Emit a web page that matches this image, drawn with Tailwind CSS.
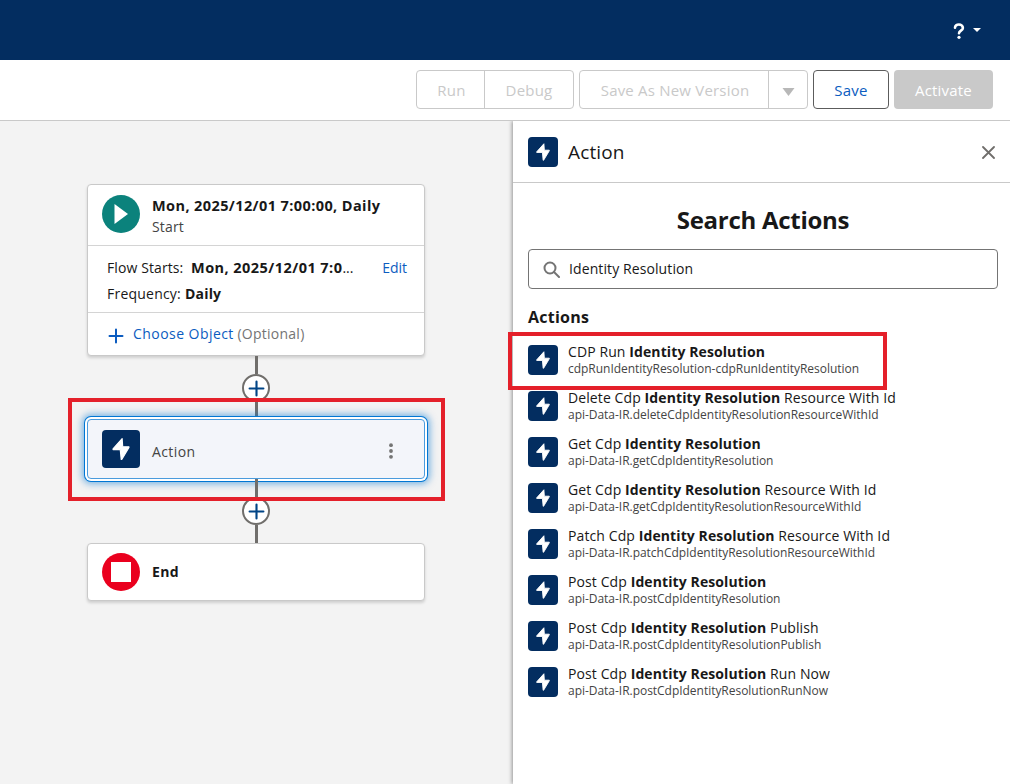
<!DOCTYPE html>
<html lang="en">
<head>
  <meta charset="UTF-8" />
  <meta name="viewport" content="width=device-width, initial-scale=1.0" />
  <title>Flow Builder – Search Actions</title>
  <!-- Tailwind CSS CDN -->
  <script src="https://cdn.jsdelivr.net/npm/@tailwindcss/browser@4"></script>
</head>
<body class="flex flex-col h-screen overflow-hidden relative bg-white font-['Open_Sans',sans-serif] text-sm text-[#181818]">

  <!-- Shared icons -->
  <svg class="hidden">
    <symbol id="bolt" viewBox="0 0 100 100">
      <path fill="#fff" stroke="#fff" stroke-width="3" stroke-linejoin="round" d="M53 22.500L29 49.500V51.500H48L50.500 77.500H52L71 46V44H54.500Z" />
    </symbol>
    <symbol id="plus" viewBox="0 0 16 16">
      <path fill="none" stroke="currentColor" stroke-width="2" stroke-linecap="round" d="M8 1.500V14.500M1.500 8H14.500" />
    </symbol>
  </svg>

  <!-- Global header -->
  <header class="flex h-[60px] shrink-0 items-center justify-end bg-[#032d60] pr-[29px]">
    <button class="flex items-center gap-2 text-white" aria-label="Help">
      <svg class="mt-0.5 h-4 w-3" viewBox="0 0 12 16" fill="none" stroke="#fff" stroke-width="2.600">
        <path stroke-linecap="round" d="M2 4.800C2 2.700 3.700 1.500 5.900 1.500S9.900 2.900 9.900 4.900C9.900 7.400 6 7.800 6 10.200" />
        <circle cx="6" cy="14.300" r="1.600" fill="#fff" stroke="none" />
      </svg>
      <svg class="h-1 w-2" viewBox="0 0 8 4"><path fill="#fff" d="M0 0H8L4 4Z" /></svg>
    </button>
  </header>

  <!-- Toolbar -->
  <div class="flex h-[61px] shrink-0 items-start justify-end gap-[5px] border-b border-[#c9c9c9] pr-[17px] pt-[10px] text-[15px] tracking-[0.2px] text-[#c9c9c9]">
    <div class="flex h-[39px] w-[158px] rounded border border-[#c9c9c9]">
      <button class="w-[68px] border-r border-[#c9c9c9] pl-0.5 pt-0.5">Run</button>
      <button class="flex-1 pt-0.5">Debug</button>
    </div>
    <div class="flex h-[39px] w-[229px] rounded border border-[#c9c9c9]">
      <button class="w-[189px] border-r border-[#c9c9c9] pl-0.5 pt-0.5">Save As New Version</button>
      <button class="flex flex-1 items-center justify-center" aria-label="More">
        <svg class="mt-1 h-2 w-[13px]" viewBox="0 0 13 8"><path fill="#b8b8b8" d="M0.500 0H12.500L6.500 8Z" /></svg>
      </button>
    </div>
    <button class="h-[39px] w-[76px] rounded border border-[#5c5c5c] pt-0.5 text-[#0b5cc0]">Save</button>
    <button class="h-[39px] w-[99px] rounded bg-[#c9c9c9] pt-0.5 text-white">Activate</button>
  </div>

  <main class="flex min-h-0 flex-1">

    <!-- Flow canvas -->
    <section class="flex w-[513px] shrink-0 flex-col items-center bg-[#f3f3f3] pr-px pt-[63px]">
      <div class="h-[172px] w-[338px] rounded border border-[#c9c9c9] bg-white shadow-[0_2px_3px_rgba(0,0,0,0.15)]">
        <div class="flex h-[61px] gap-3 border-b border-[#d4d4d4] pl-[14px] pt-[10px]">
          <svg class="size-[38px]" viewBox="0 0 38 38">
            <circle cx="19" cy="19" r="19" fill="#0b827c" />
            <path fill="#fff" d="M12.500 9V29L26 19Z" />
          </svg>
          <div class="leading-[21px]">
            <p class="text-[14.5px] font-bold leading-[21px] tracking-[0.4px]">Mon, 2025/12/01 7:00:00, Daily</p>
            <p class="tracking-[0.15px] text-[#444]">Start</p>
          </div>
        </div>
        <div class="h-[67px] border-b border-[#d4d4d4] pl-[19px] pr-[17px] pt-[9px] leading-[26px]">
          <div class="flex justify-between">
            <p class="whitespace-nowrap"><span class="tracking-[0.1px]">Flow Starts:</span> <b class="ml-1 text-[14.5px] leading-[26px] tracking-[0.45px]">Mon, 2025/12/01 7:0</b>...</p>
            <a class="text-[#0b5cc0]">Edit</a>
          </div>
          <p class="tracking-[0.22px]">Frequency: <b>Daily</b></p>
        </div>
        <div class="flex h-[42px] items-center gap-[9px] pl-5 text-[#0b5cc0]">
          <svg class="mt-[3px] size-4"><use href="#plus" /></svg>
          <p><span class="tracking-[0.45px]">Choose Object</span> <span class="tracking-[0.25px] text-[#747474]">(Optional)</span></p>
        </div>
      </div>

      <div class="h-[18px] w-[3px] bg-[#706e6b]"></div>
      <button class="flex size-7 items-center justify-center rounded-full border-2 border-[#706e6b] bg-white text-[#014486]" aria-label="Add element">
        <svg class="mt-px size-[17px]"><use href="#plus" /></svg>
      </button>
      <div class="h-[17px] w-[3px] bg-[#706e6b]"></div>

      <div class="flex h-[60px] w-[338px] items-center rounded border border-[#4a9bdd] bg-[#f3f5fa] pl-[14px] pr-[26px] shadow-[0_0_0_2px_#fff,0_0_0_3px_#0176d3,0_0_7px_5px_rgba(1,118,211,0.5)]">
        <span class="size-[38px] rounded bg-[#032d60]"><svg class="size-full"><use href="#bolt" /></svg></span>
        <p class="ml-3 mt-[5px] flex-1 tracking-[0.4px] text-[#444]">Action</p>
        <svg class="mt-[3px] h-4 w-[14px]" viewBox="0 0 14 16" fill="#747474">
          <circle cx="7" cy="2.200" r="1.900" /><circle cx="7" cy="8" r="1.900" /><circle cx="7" cy="13.800" r="1.900" />
        </svg>
      </div>

      <div class="h-[18px] w-[3px] bg-[#706e6b]"></div>
      <button class="flex size-7 items-center justify-center rounded-full border-2 border-[#706e6b] bg-white text-[#014486]" aria-label="Add element">
        <svg class="size-[17px]"><use href="#plus" /></svg>
      </button>
      <div class="h-[18px] w-[3px] bg-[#706e6b]"></div>

      <div class="flex h-[58px] w-[338px] items-center gap-3 rounded border border-[#c9c9c9] bg-white pl-[14px] shadow-[0_2px_3px_rgba(0,0,0,0.15)]">
        <svg class="size-[38px]" viewBox="0 0 38 38">
          <circle cx="19" cy="19" r="19" fill="#ea001e" />
          <path fill="#fff" d="M9 9H29V29H9Z" />
        </svg>
        <b class="tracking-[0.3px]">End</b>
      </div>
    </section>

    <!-- Action panel -->
    <aside class="relative flex-1 bg-white shadow-[-1px_0_4px_rgba(0,0,0,0.4)] [clip-path:inset(0_0_0_-8px)]">
      <div class="flex h-[62px] items-center border-b border-[#c9c9c9] pl-[15px] pr-[15px]">
        <span class="size-[30px] rounded bg-[#032d60]"><svg class="size-full"><use href="#bolt" /></svg></span>
        <h2 class="ml-[10px] mt-[3px] flex-1 text-[19px] tracking-[0.15px]">Action</h2>
        <svg class="mt-0.5 size-[13px]" viewBox="0 0 13 13"><path stroke="#706e6b" stroke-width="1.800" stroke-linecap="round" d="M1 1L12 12M12 1L1 12" /></svg>
      </div>

      <div class="pl-[15px] pr-3">
        <h1 class="mt-[19px] text-center text-2xl font-bold leading-9 tracking-[-0.28px]">Search Actions</h1>
        <div class="mt-[11px] flex h-10 items-center gap-[9px] rounded border border-[#747474] pl-[14px]">
          <svg class="size-[17px]" viewBox="0 0 17 17" fill="none" stroke="#747474" stroke-width="2">
            <circle cx="7" cy="7" r="5.500" /><path stroke-linecap="round" d="M11 11L16 16" />
          </svg>
          <span class="tracking-[0.1px]">Identity Resolution</span>
        </div>
        <h3 class="mt-4 text-base font-bold leading-6 tracking-[0.25px]">Actions</h3>
      </div>

      <ul id="action-list" class="mt-4 pl-[15px]"></ul>
    </aside>
  </main>

  <!-- Callouts -->
  <div class="absolute left-[68px] top-[398px] h-[103px] w-[377px] border-4 border-[#e4202a]"></div>
  <div class="absolute left-[508px] top-[332px] h-[58px] w-[379px] border-4 border-[#e4202a]"></div>

  <script>
    const actions = [
      ['CDP Run', '', 'cdpRunIdentityResolution-cdpRunIdentityResolution'],
      ['Delete Cdp', 'Resource With Id', 'api-Data-IR.deleteCdpIdentityResolutionResourceWithId'],
      ['Get Cdp', '', 'api-Data-IR.getCdpIdentityResolution'],
      ['Get Cdp', 'Resource With Id', 'api-Data-IR.getCdpIdentityResolutionResourceWithId'],
      ['Patch Cdp', 'Resource With Id', 'api-Data-IR.patchCdpIdentityResolutionResourceWithId'],
      ['Post Cdp', '', 'api-Data-IR.postCdpIdentityResolution'],
      ['Post Cdp', 'Publish', 'api-Data-IR.postCdpIdentityResolutionPublish'],
      ['Post Cdp', 'Run Now', 'api-Data-IR.postCdpIdentityResolutionRunNow'],
    ];

    document.getElementById('action-list').innerHTML = actions.map(([before, after, api]) => `
      <li class="flex h-[46px] gap-[10px]">
        <span class="size-[30px] shrink-0 rounded bg-[#032d60]"><svg class="size-full"><use href="#bolt" /></svg></span>
        <div class="-mt-[2px] whitespace-nowrap">
          <p class="leading-[18px] tracking-[0.1px]">${before} <b>Identity Resolution</b> ${after}</p>
          <p class="text-xs leading-4 tracking-[-0.03px] text-[#444]">${api}</p>
        </div>
      </li>`).join('');
  </script>
</body>
</html>
